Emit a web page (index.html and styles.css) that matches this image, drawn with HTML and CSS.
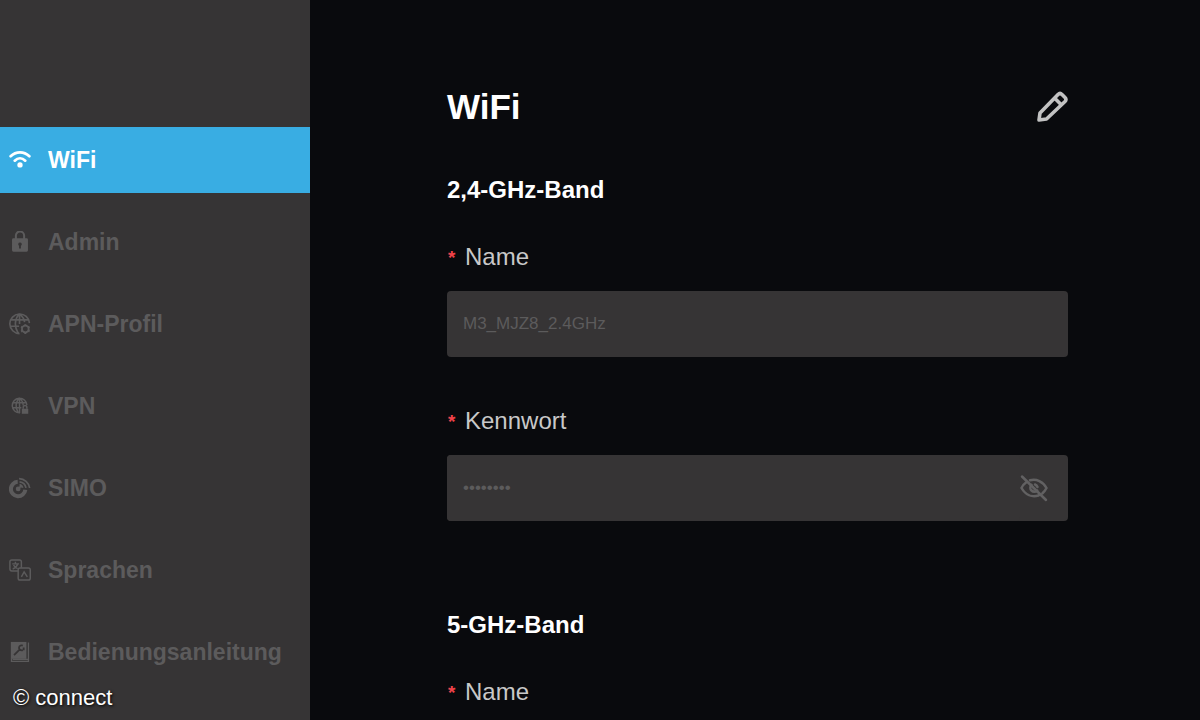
FILE: index.html
```html
<!DOCTYPE html>
<html lang="de">

<head>
    <meta charset="UTF-8">
    <meta name="viewport" content="width=device-width, initial-scale=1.0">
    <title>WiFi</title>

    <link rel="stylesheet" href="styles.css">
</head>

<body>
    <div class="page">
        <nav class="sidebar">
            <a href="#wifi" class="menu-item active">
                <svg class="icon" viewBox="0 0 24 24" fill="none" stroke="currentColor" stroke-width="3" stroke-linecap="round">
                    <path d="M1.8 8C7.6 2.1 16.4 2.1 22.2 8M6.3 12.7C9.7 9.4 14.3 9.4 17.7 12.7" />
                    <circle cx="12" cy="17.4" r="2.9" fill="currentColor" stroke="none" />
                </svg>
                WiFi
            </a>
            <a href="#admin" class="menu-item">
                <svg class="icon" viewBox="0 0 24 24" fill="none">
                    <path d="M7.5 10V5a4.500 4.500 0 0 1 9 0v5" stroke="currentColor" stroke-width="2.2" />
                    <path fill="currentColor" fill-rule="evenodd" d="M4.800 8h14.400a1.500 1.500 0 0 1 1.500 1.500v11.500a1.500 1.500 0 0 1-1.500 1.500H4.800a1.500 1.500 0 0 1-1.500-1.500V9.500A1.500 1.500 0 0 1 4.800 8zM12 12.500a2 2 0 0 0-1 3.700V19h2v-2.800a2 2 0 0 0-1-3.700z" />
                </svg>
                Admin
            </a>
            <a href="#apn" class="menu-item">
                <svg class="icon" viewBox="0 0 24 24" fill="none" stroke="currentColor" stroke-width="1.8">
                    <path d="M11.5 22.5A10.7 10.7 0 1 1 22.3 11M10 22C5.5 15 6 6 11.5 1M11.5 1C15 4 16.700 7 17 10M11.5 1V12M2 7.500h19.500M1 14.500h10" />
                    <circle cx="17.8" cy="17.5" r="3.700" stroke-width="2" />
                    <path stroke-width="2.200" d="M17.8 12.200v1.800M17.8 21v1.800M13.200 14.800l1.500.9M20.900 19.300l1.500.9M13.200 20.200l1.500-.9M20.900 15.700l1.500-.9" />
                </svg>
                APN-Profil
            </a>
            <a href="#vpn" class="menu-item">
                <svg class="icon" viewBox="0 0 24 24" fill="none" stroke="currentColor" stroke-width="1.6">
                    <path d="M12 19.5A8 8 0 1 1 19.5 11M10 19C6.5 14 7 7 11.5 3.5C14.5 6 15.5 8.5 15.5 11.5M11.5 3.5V19.5M4.5 8.5h14.5M3.5 14h10" />
                    <path d="M15.5 15v-1.500a2 2 0 0 1 4 0V15" />
                    <path fill="currentColor" stroke="none" d="M14 15h7v5.500h-7z" />
                </svg>
                VPN
            </a>
            <a href="#simo" class="menu-item">
                <svg class="icon" viewBox="0 0 24 24" fill="none" stroke="currentColor">
                    <path stroke-width="4.4" d="M9.500 5.200A7.900 7.900 0 1 0 17.800 14" />
                    <circle cx="10" cy="13" r="2.6" fill="currentColor" stroke="none" />
                    <path stroke-width="1.9" d="M10 13l3-3M11.500 5.200A8 8 0 0 1 18.500 11.800M11 1.800A11.800 11.800 0 0 1 22.500 12M11.500 8.400A5 5 0 0 1 15 11.800" />
                </svg>
                SIMO
            </a>
            <a href="#sprachen" class="menu-item">
                <svg class="icon" viewBox="0 0 24 24" fill="none" stroke="currentColor" stroke-width="1.6">
                    <path d="M10 13H3a2 2 0 0 1-2-2V3a2 2 0 0 1 2-2h8.500a2 2 0 0 1 2 2v6.500" />
                    <rect x="10" y="9.700" width="13.200" height="13.200" rx="2" />
                    <path d="M7 3v2M3.500 5.300h7.500M9.500 5.500C8.500 8.500 6.500 10 4 11M5 6.500C6 9 7.500 10 9.500 10.500" />
                    <path d="M13.500 19.500l3-5.500 3.500 5.500" />
                </svg>
                Sprachen
            </a>
            <a href="#anleitung" class="menu-item">
                <svg class="icon" viewBox="0 0 24 24" fill="none">
                    <path fill="currentColor" d="M2 1h17v18.500H2z" />
                    <path class="tool" d="M5.500 15.500l6-6M11 6.500a3 3 0 0 1 4-1.500M11 6.500a3 3 0 0 0 4 3.500M16 7v3" stroke-width="2" />
                    <path stroke="currentColor" stroke-width="1.4" d="M2.700 19v3.300h18.500V1.500M21 20H4" />
                </svg>
                Bedienungsanleitung
            </a>
        </nav>

        <main class="content">
            <header class="title-row">
                <h1>WiFi</h1>
                <button type="button" class="icon-btn edit-btn" aria-label="Bearbeiten">
                    <svg viewBox="0 0 32 32" fill="none" stroke="currentColor" stroke-width="3.6" stroke-linejoin="round">
                        <path d="M3 29L4 22L22 3.500Q24 1.500 26 3.500L29 6.500Q31 8.500 29 10.500L10.500 28zM18.500 7L25.500 14" />
                    </svg>
                </button>
            </header>

            <section class="band">
                <h2>2,4-GHz-Band</h2>
                <div class="field">
                    <label for="name24"><span class="star">*</span>Name</label>
                    <input id="name24" type="text" value="M3_MJZ8_2.4GHz" readonly>
                </div>
                <div class="field">
                    <label for="pass24"><span class="star">*</span>Kennwort</label>
                    <div class="password">
                        <input id="pass24" type="password" value="12345678" readonly>
                        <button type="button" class="icon-btn eye-btn" aria-label="Kennwort anzeigen">
                            <svg viewBox="0 0 28 28" fill="none" stroke="currentColor" stroke-width="2.5" stroke-linecap="round">
                                <path d="M2 2.500L26 26M10 6.200C16.500 4.500 23 7.500 26.500 14Q25 17 22.500 19.200M6 8.500Q3 10.500 1.500 14C5.500 21 12 23.500 18.500 21.500" />
                                <path d="M11.500 10.800A4 4 0 1 0 17.200 16.500M15 10.500A4 4 0 0 1 17.500 13" />
                            </svg>
                        </button>
                    </div>
                </div>
            </section>

            <section class="band">
                <h2>5-GHz-Band</h2>
                <div class="field">
                    <label for="name5"><span class="star">*</span>Name</label>
                    <input id="name5" type="text" readonly>
                </div>
            </section>
        </main>

        <div class="credit">© connect</div>
    </div>
</body>

</html>
```
FILE: styles.css
```css
* {
    box-sizing: border-box;
}

body {
    margin: 0;
    background-color: #090a0d;
    font-family: "Liberation Sans", Arial, sans-serif;
}

h1,
h2 {
    margin: 0;
    color: white;
}

h1 {
    font-size: 35px;
    line-height: 40px;
}

h2 {
    font-size: 24px;
    line-height: 28px;
    margin-bottom: 39px;
}

.page {
    position: relative;
    display: flex;
    height: 100vh;
    overflow: hidden;
}

/* sidebar */

.sidebar {
    flex: 0 0 310px;
    display: flex;
    flex-direction: column;
    gap: 16px;
    padding-top: 127px;
    background-color: #363435;
}

.menu-item {
    display: flex;
    align-items: center;
    flex-shrink: 0;
    gap: 17px;
    height: 66px;
    padding-left: 9px;
    color: #5c5b5c;
    font-size: 23px;
    font-weight: bold;
    text-decoration: none;
}

.menu-item.active {
    background-color: #39ade3;
    color: white;
}

.icon {
    width: 22px;
    height: 22px;
}

.tool {
    stroke: #363435;
}

/* settings */

.content {
    flex: 1;
    min-width: 0;
    padding: 87px 132px 0 137px;
    overflow-y: auto;
    scrollbar-width: none;
}

.title-row {
    display: flex;
    justify-content: space-between;
    align-items: center;
    margin-bottom: 49px;
}

.band {
    margin-bottom: 90px;
}

.field {
    margin-bottom: 50px;
}

label {
    display: flex;
    align-items: center;
    margin-bottom: 20px;
    color: #c8c8c8;
    font-size: 24px;
    line-height: 28px;
}

.star {
    width: 18px;
    padding: 2px 0 0 1px;
    color: #f0434a;
    font-size: 19px;
    font-weight: bold;
    line-height: 24px;
}

input {
    display: block;
    width: 100%;
    height: 66px;
    padding: 0 16px;
    border: none;
    border-radius: 4px;
    outline: none;
    background-color: #363435;
    color: #5c5b5c;
    font-family: inherit;
    font-size: 17px;
}

.password {
    display: flex;
    align-items: center;
    padding-right: 20px;
    border-radius: 4px;
    background-color: #363435;
}

.icon-btn {
    flex-shrink: 0;
    padding: 0;
    border: none;
    background: none;
    cursor: pointer;
}

.icon-btn svg {
    display: block;
    width: 100%;
}

.edit-btn {
    width: 32px;
    color: #c2c2c2;
}

.eye-btn {
    width: 28px;
    color: #626162;
}

.credit {
    position: absolute;
    left: 13px;
    bottom: 9px;
    color: white;
    font-size: 22px;
    line-height: 26px;
    text-shadow: 1px 1px 3px black;
}
```
